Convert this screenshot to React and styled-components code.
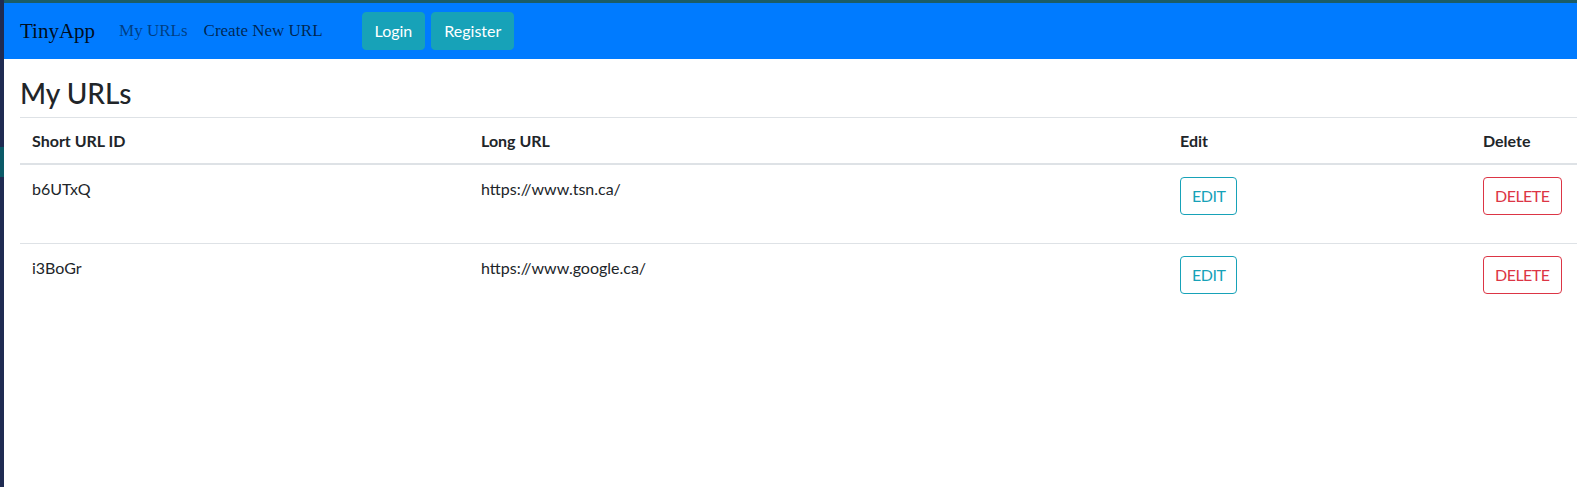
import React from "react";
import styled, { createGlobalStyle } from "styled-components";

const Global = createGlobalStyle`
  html, body { margin: 0; padding: 0; background: #ffffff; }
  body { font-family: "Segoe UI", Lato, "Noto Sans", sans-serif; color: #212529; overflow: hidden; }
  * { box-sizing: border-box; }
`;

const Page = styled.div`
  display: flex;
  width: 1577px;
  height: 487px;
`;

const SideStrip = styled.div`
  width: 4px;
  flex: none;
  background: #1f2b52;
  display: flex;
  flex-direction: column;
`;

const SideMarker = styled.div`
  margin-top: 147px;
  height: 30px;
  background: #0b5a68;
`;

const Main = styled.div`
  flex: 1;
  display: flex;
  flex-direction: column;
  min-width: 0;
`;

const TopLine = styled.div`
  height: 3px;
  background: #1b5c66;
`;

const Navbar = styled.nav`
  height: 56px;
  background: #007bff;
  display: flex;
  align-items: center;
  padding: 0 16px;
  font-family: "Liberation Serif", "Times New Roman", serif;
`;

const Brand = styled.a`
  font-size: 21px;
  color: rgba(0, 0, 0, 0.9);
  margin-right: 16px;
  text-decoration: none;
  line-height: 30px;
`;

const NavLink = styled.a`
  font-size: 17px;
  padding: 8px;
  color: ${(p) => (p.$active ? "rgba(0,0,0,0.7)" : "rgba(0,0,0,0.5)")};
  text-decoration: none;
`;

const NavButtons = styled.div`
  display: flex;
  gap: 6px;
  margin-left: 31px;
`;

const NavButton = styled.button`
  font-family: "Segoe UI", Lato, "Noto Sans", sans-serif;
  font-size: 16px;
  line-height: 24px;
  padding: 6px 12px;
  height: 38px;
  color: #fff;
  background: #17a2b8;
  border: 1px solid #17a2b8;
  border-radius: 4px;
`;

const Content = styled.div`
  padding: 17px 0 0 16px;
`;

const Title = styled.h2`
  margin: 0 0 6px;
  font-size: 28px;
  font-weight: 500;
  line-height: 35px;
  color: #212529;
`;

const Table = styled.table`
  width: 1557px;
  border-collapse: collapse;
  table-layout: fixed;
`;

const Th = styled.th`
  text-align: left;
  font-size: 16px;
  font-weight: 700;
  line-height: 25px;
  padding: 10px 12px;
  border-top: 1px solid #dee2e6;
  border-bottom: 2px solid #dee2e6;
`;

const Td = styled.td`
  vertical-align: top;
  font-size: 16px;
  line-height: 24px;
  padding: 12px 12px;
  border-top: 1px solid #dee2e6;
`;

const ActionForm = styled.form`
  margin: 0 0 16px;
`;

const OutlineButton = styled.button`
  font-family: "Segoe UI", Lato, "Noto Sans", sans-serif;
  font-size: 16px;
  line-height: 24px;
  height: 38px;
  padding: 6px 11px;
  letter-spacing: -0.5px;
  background: transparent;
  color: ${(p) => p.$color};
  border: 1px solid ${(p) => p.$color};
  border-radius: 4px;
`;

const urls = [
  { id: "b6UTxQ", long: "https://www.tsn.ca/" },
  { id: "i3BoGr", long: "https://www.google.ca/" },
];

export default function App() {
  return (
    <>
      <Global />
      <Page>
        <SideStrip>
          <SideMarker />
        </SideStrip>
        <Main>
          <TopLine />
          <Navbar>
            <Brand href="#">TinyApp</Brand>
            <NavLink href="#">My URLs</NavLink>
            <NavLink href="#" $active>Create New URL</NavLink>
            <NavButtons>
              <NavButton>Login</NavButton>
              <NavButton>Register</NavButton>
            </NavButtons>
          </Navbar>
          <Content>
            <Title>My URLs</Title>
            <Table>
              <colgroup>
                <col style={{ width: 449 }} />
                <col style={{ width: 699 }} />
                <col style={{ width: 303 }} />
                <col style={{ width: 106 }} />
              </colgroup>
              <thead>
                <tr>
                  <Th>Short URL ID</Th>
                  <Th>Long URL</Th>
                  <Th>Edit</Th>
                  <Th>Delete</Th>
                </tr>
              </thead>
              <tbody>
                {urls.map((u) => (
                  <tr key={u.id}>
                    <Td>{u.id}</Td>
                    <Td>{u.long}</Td>
                    <Td>
                      <ActionForm>
                        <OutlineButton type="button" $color="#17a2b8">EDIT</OutlineButton>
                      </ActionForm>
                    </Td>
                    <Td>
                      <ActionForm>
                        <OutlineButton type="button" $color="#dc3545">DELETE</OutlineButton>
                      </ActionForm>
                    </Td>
                  </tr>
                ))}
              </tbody>
            </Table>
          </Content>
        </Main>
      </Page>
    </>
  );
}
